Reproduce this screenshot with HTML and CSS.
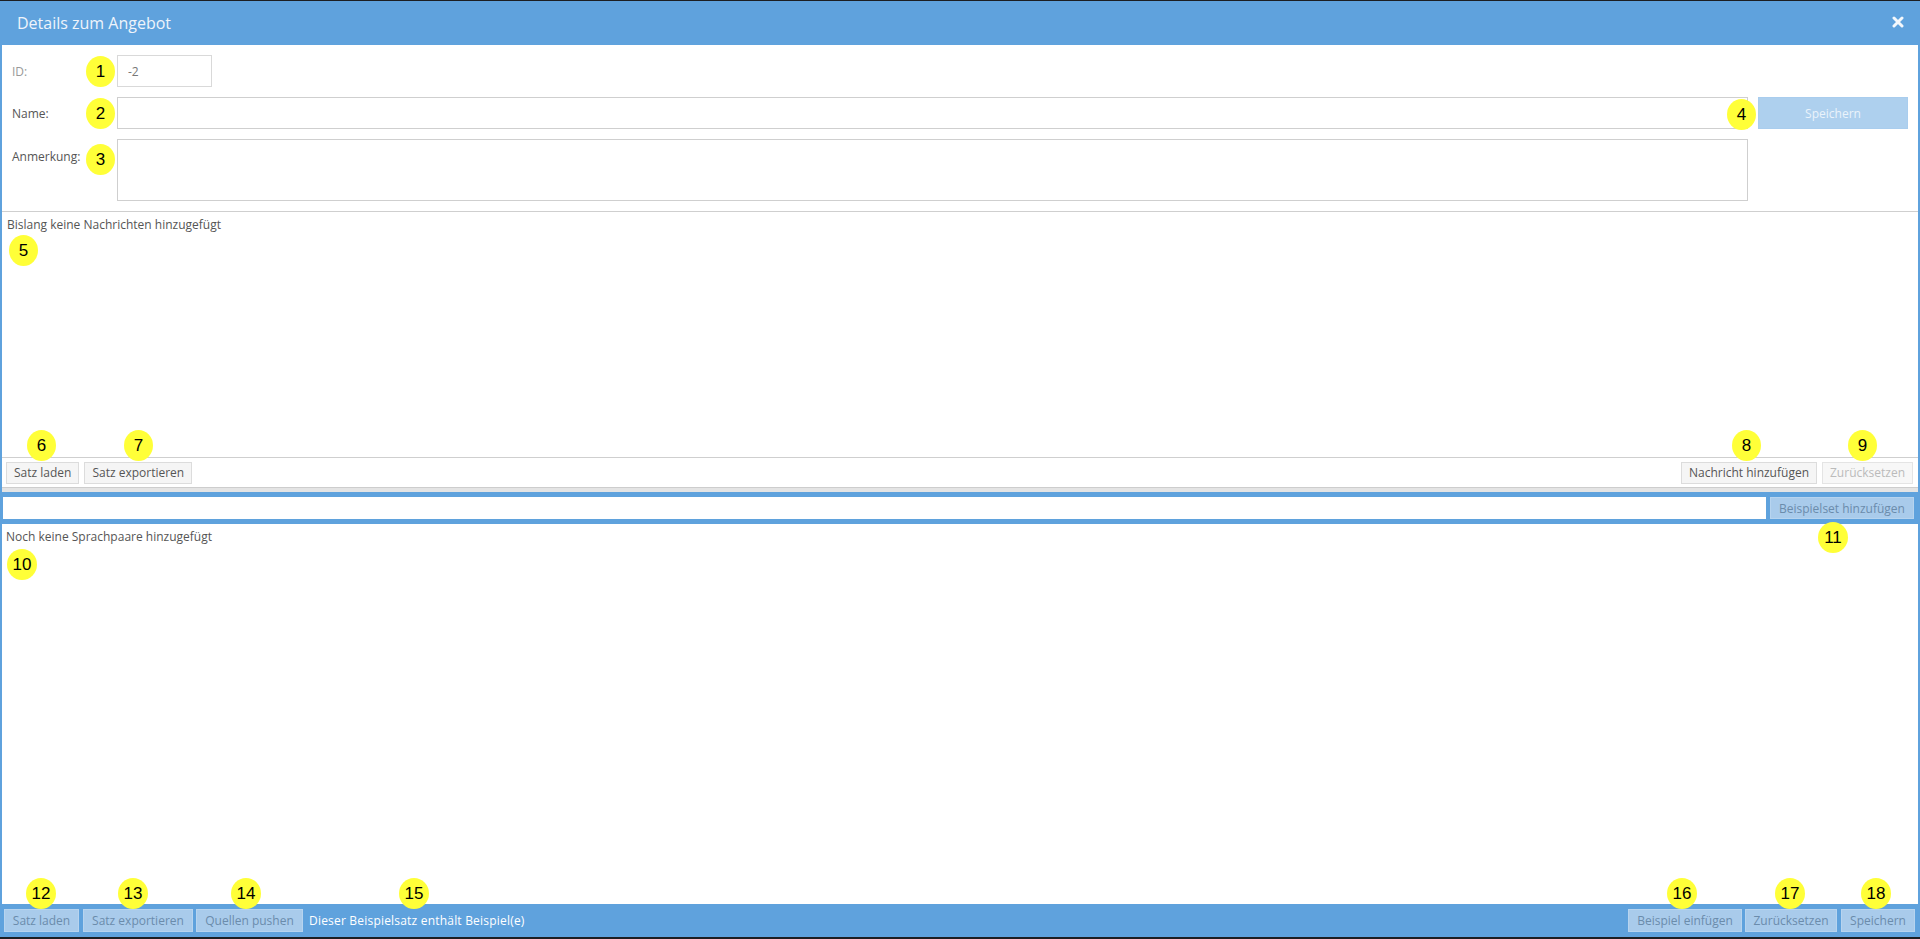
FILE: index.html
```html
<!DOCTYPE html>
<html lang="de">
<head>
<meta charset="utf-8">
<title>Details zum Angebot</title>
<link rel="stylesheet" href="styles.css">
</head>
<body>
<div class="page">
  <header class="dlg-head">
    <span class="title">Details zum Angebot</span>
    <button class="close" aria-label="Schließen">
      <svg width="12" height="12" viewBox="0 0 12 12"><path d="M2 2 L10 10 M10 2 L2 10" stroke="#f4f8fc" stroke-width="3" stroke-linecap="round"/></svg>
    </button>
  </header>

  <div class="dlg-body">
    <section class="meta">
      <div class="row">
        <label class="lbl lbl-id">ID:</label>
        <input class="inp inp-id" value="-2" readonly>
      </div>
      <div class="row">
        <label class="lbl">Name:</label>
        <input class="inp inp-name">
        <button class="btn-save">Speichern</button>
      </div>
      <div class="row row-top">
        <label class="lbl lbl-top">Anmerkung:</label>
        <textarea class="ta"></textarea>
      </div>
    </section>

    <section class="messages">
      <p class="empty">Bislang keine Nachrichten hinzugefügt</p>
    </section>

    <div class="toolbar">
      <div class="group">
        <button class="btn">Satz laden</button>
        <button class="btn">Satz exportieren</button>
      </div>
      <div class="group">
        <button class="btn">Nachricht hinzufügen</button>
        <button class="btn btn-disabled">Zurücksetzen</button>
      </div>
    </div>
    <div class="band"></div>

    <div class="set-bar">
      <input class="set-input">
      <button class="btn-blue btn-set">Beispielset hinzufügen</button>
    </div>

    <section class="pairs">
      <p class="empty">Noch keine Sprachpaare hinzugefügt</p>
    </section>
  </div>

  <footer class="dlg-foot">
    <div class="group">
      <button class="btn-blue f1">Satz laden</button>
      <button class="btn-blue f2">Satz exportieren</button>
      <button class="btn-blue f3">Quellen pushen</button>
      <span class="foot-text">Dieser Beispielsatz enthält Beispiel(e)</span>
    </div>
    <div class="group">
      <button class="btn-blue f4">Beispiel einfügen</button>
      <button class="btn-blue f5">Zurücksetzen</button>
      <button class="btn-blue f6">Speichern</button>
    </div>
  </footer>

  <span class="badge b1">1</span>
  <span class="badge b2">2</span>
  <span class="badge b3">3</span>
  <span class="badge b4">4</span>
  <span class="badge b5">5</span>
  <span class="badge b6">6</span>
  <span class="badge b7">7</span>
  <span class="badge b8">8</span>
  <span class="badge b9">9</span>
  <span class="badge b10">10</span>
  <span class="badge b11">11</span>
  <span class="badge b12">12</span>
  <span class="badge b13">13</span>
  <span class="badge b14">14</span>
  <span class="badge b15">15</span>
  <span class="badge b16">16</span>
  <span class="badge b17">17</span>
  <span class="badge b18">18</span>
</div>
</body>
</html>
```

FILE: styles.css
```css
* { box-sizing: border-box; }
html, body { margin: 0; padding: 0; }
body {
  background: #1c1e22;
  font-family: "Open Sans", "Liberation Sans", sans-serif;
  font-size: 12px;
  color: #555;
  height: 939px;
  overflow: hidden;
}
.page {
  position: relative;
  margin-top: 1px;
  height: 936px;
  display: flex;
  flex-direction: column;
  background: #fff;
}
button, input, textarea { font-family: inherit; font-size: 12px; }

/* header */
.dlg-head {
  height: 44px;
  flex: none;
  background: #5fa2dd;
  display: flex;
  align-items: center;
  justify-content: space-between;
  padding: 0 16px 0 17px;
}
.title { color: #eef4fb; font-size: 16px; line-height: 20px; margin-top: -1px; }
.close {
  border: 0; background: none; padding: 0; width: 12px; height: 12px;
  display: flex; margin-top: -2px;
}

/* body */
.dlg-body {
  flex: 1;
  display: flex;
  flex-direction: column;
  border-left: 2px solid #5fa2dd;
  border-right: 2px solid #5fa2dd;
  min-height: 0;
}
.meta {
  padding: 10px;
  display: flex;
  flex-direction: column;
  gap: 10px;
  border-bottom: 1px solid #cfcfcf;
}
.row { display: flex; align-items: center; gap: 10px; }
.row-top { align-items: flex-start; }
.lbl { width: 95px; flex: none; color: #555; line-height: 17px; }
.lbl-id { color: #999; }
.lbl-top { padding-top: 9px; }
.inp {
  height: 32px;
  border: 1px solid #d9d9d9;
  padding: 0 10px;
  color: #777;
  outline: none;
  background: #fff;
}
.inp-id { width: 95px; }
.inp-name { flex: 1; border-color: #cfcfcf; }
.btn-save {
  width: 150px; height: 32px; flex: none;
  background: #aed0ee; border: 1px solid #a9cdee;
  color: #eaf3fb;
}
.ta {
  flex: 1;
  height: 62px;
  margin-right: 160px;
  border: 1px solid #cfcfcf;
  resize: none;
  outline: none;
}

.messages {
  height: 246px;
  flex: none;
  border-bottom: 1px solid #cfcfcf;
  padding: 4px 5px;
}
.empty { margin: 0; line-height: 17px; color: #555; }

.toolbar {
  height: 29px;
  flex: none;
  display: flex;
  justify-content: space-between;
  align-items: center;
  padding: 0 5px 0 4px;
}
.group { display: flex; align-items: center; gap: 5px; }
.btn {
  height: 22px;
  padding: 0 7px;
  background: #f5f5f5;
  border: 1px solid #dcdcdc;
  color: #555;
}
.btn-disabled { color: #bbb; background: #f7f7f7; border-color: #e4e4e4; }
.band {
  height: 5px;
  flex: none;
  border-top: 1px solid #cdcdcd;
  background: #e4e4e4;
}

.set-bar {
  height: 32px;
  flex: none;
  background: #5fa2dd;
  display: flex;
  align-items: center;
  gap: 4px;
  margin: 0 -2px;
  padding: 0 6px 0 3px;
}
.set-input { flex: 1; height: 22px; border: 0; outline: none; background: #fff; }
.btn-blue {
  height: 23px;
  padding: 0 7px;
  background: #a9cbeb;
  border: 1px solid #b7d4ef;
  color: #6b8cab;
}
.btn-set { width: 144px; height: 22px; }

.pairs {
  flex: 1;
  padding: 4px;
}

/* footer */
.dlg-foot {
  height: 33px;
  flex: none;
  background: #5fa2dd;
  display: flex;
  justify-content: space-between;
  align-items: center;
  padding: 0 5px 0 4px;
}
.dlg-foot .group { gap: 4px; }
.f1 { width: 75px; }
.f2 { width: 110px; }
.f3 { width: 107px; margin-left: -1px; }
.f4 { width: 114px; }
.f5 { width: 92px; margin-left: -1px; }
.f6 { width: 74px; }
.foot-text { color: #fff; margin-left: 2px; letter-spacing: 0.2px; }

/* annotation markers */
.badge {
  position: absolute;
  width: 29px;
  height: 31px;
  border-radius: 50%;
  background: #ffff38;
  color: #000;
  font-family: "Liberation Sans", Arial, sans-serif;
  font-size: 17px;
  display: flex;
  align-items: center;
  justify-content: center;
}
.b1 { left: 86px; top: 55px; }
.b2 { left: 86px; top: 97px; }
.b3 { left: 86px; top: 143px; }
.b4 { left: 1727px; top: 98px; }
.b5 { left: 9px; top: 234px; }
.b6 { left: 27px; top: 429px; }
.b7 { left: 124px; top: 429px; }
.b8 { left: 1732px; top: 429px; }
.b9 { left: 1848px; top: 429px; }
.b10 { left: 7px; top: 548px; width: 30px; }
.b11 { left: 1818px; top: 521px; width: 30px; }
.b12 { left: 26px; top: 877px; width: 30px; }
.b13 { left: 118px; top: 877px; width: 30px; }
.b14 { left: 231px; top: 877px; width: 30px; }
.b15 { left: 399px; top: 877px; width: 30px; }
.b16 { left: 1667px; top: 877px; width: 30px; }
.b17 { left: 1775px; top: 877px; width: 30px; }
.b18 { left: 1861px; top: 877px; width: 30px; }
```
